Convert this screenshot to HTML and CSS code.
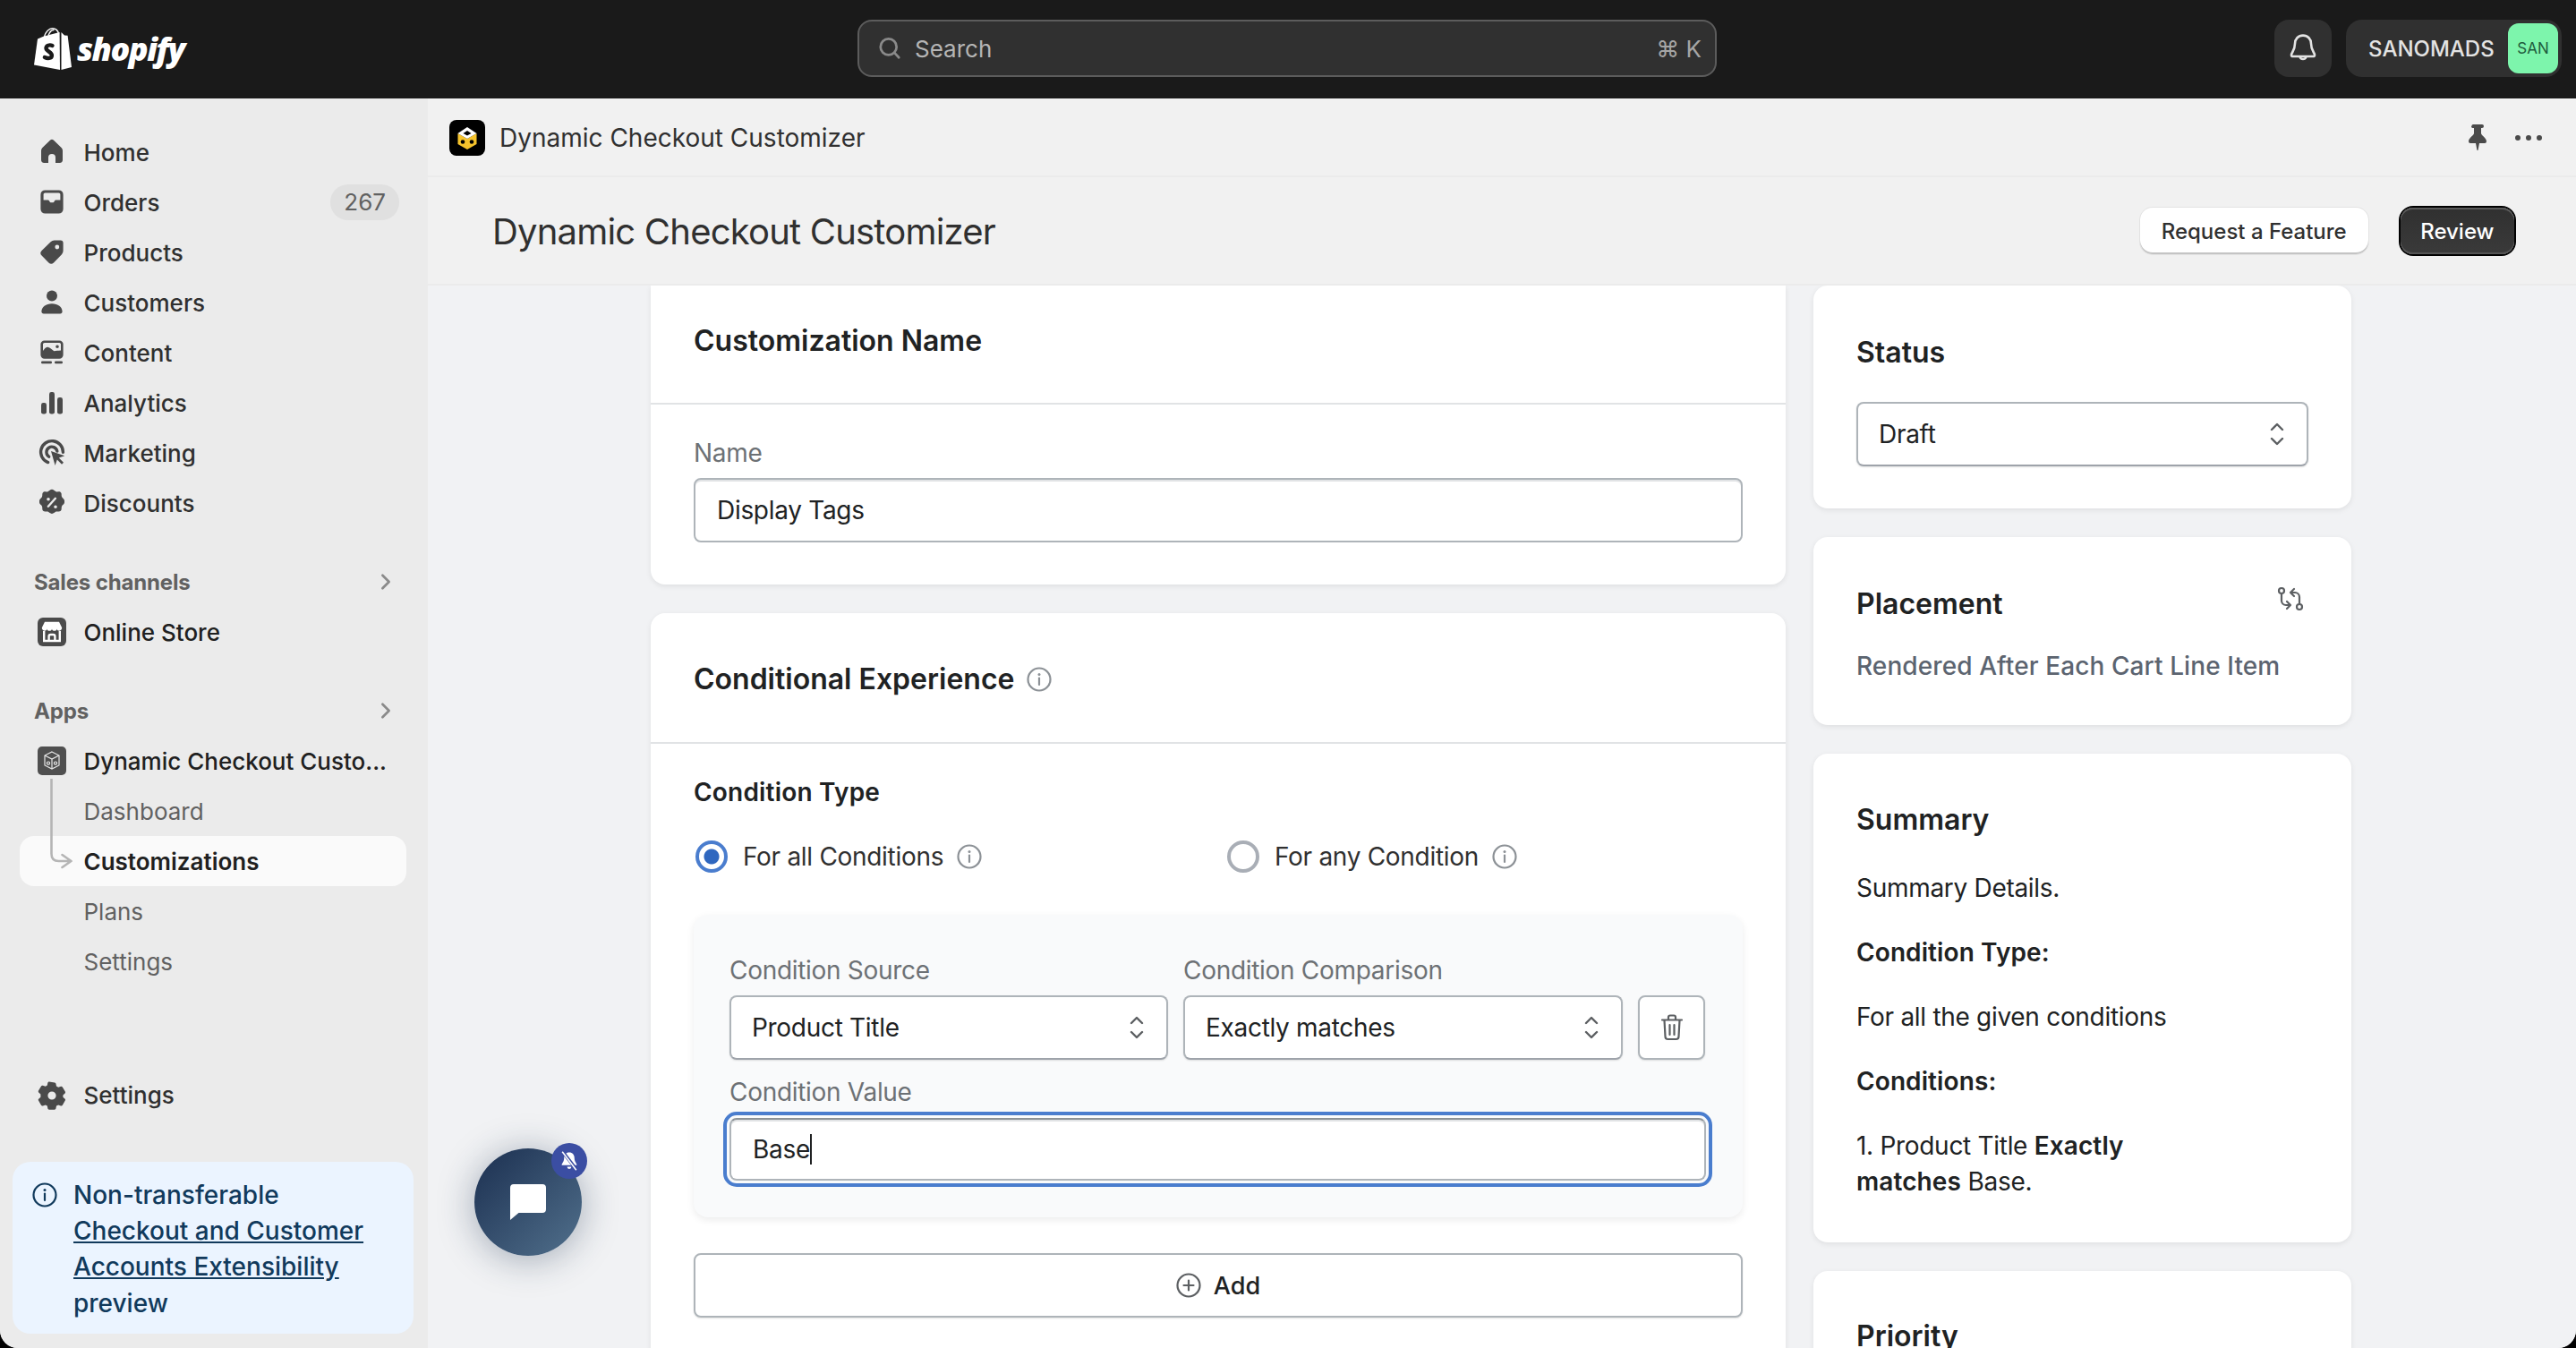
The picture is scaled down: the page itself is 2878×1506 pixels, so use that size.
FILE: index.html
```html
<!DOCTYPE html>
<html lang="en">
  <head>
    <meta charset="UTF-8" />
    <meta name="viewport" content="width=device-width, initial-scale=1.0" />
    <title>Dynamic Checkout Customizer</title>
    <link rel="stylesheet" href="styles.css">
  </head>

  <body>
    <div class="shell">
      <header class="topbar">
        <div class="logo">
          <svg class="logo-bag" viewBox="0 0 42 47" width="42" height="47">
            <path fill="#fff" fill-rule="evenodd" d="M11 9.5 28.6 5 29 47 0 41.5 4 12.5z"/>
            <path fill="#fff" d="M30.5 5 34 8.5l3.6.3L42 44l-11.5 3z"/>
            <path fill="none" stroke="#fff" stroke-width="1.4" d="M11.5 10C13 4 17 .8 20.500.8 25 .8 27 4 27.500 7M16 8.500C17.500 4.500 20 2.200 22.500 2.500"/>
            <path fill="none" stroke="#1a1a1a" stroke-width="4.400" stroke-linecap="round" d="M20.500 20c-3-1.300-7-.3-7 2.800 0 3.800 6.800 4 6.400 8.400-.3 3.200-4.800 3.400-8 1.800"/>
          </svg>
          <span class="logo-text">shopify</span>
        </div>
        <div class="search">
          <svg class="search-icon" viewBox="0 0 20 20" width="32" height="32"><circle cx="9.200" cy="9" r="5.600" fill="none" stroke="#8a8a8a" stroke-width="1.700"/><path d="m13.400 13.200 3 3.200" stroke="#8a8a8a" stroke-width="1.700" stroke-linecap="round"/></svg>
          <span class="search-text">Search</span>
          <span class="search-key">⌘ K</span>
        </div>
        <div class="top-actions">
          <div class="bell">
            <svg viewBox="0 0 20 20" width="40" height="40"><path fill="none" stroke="#e3e3e3" stroke-width="1.300" stroke-linejoin="round" d="M10 2.800c-2.700 0-4.500 2-4.500 4.600 0 3.700-2 5-2 6.300 0 .5.400.8 1 .8h11c.6 0 1-.3 1-.8 0-1.300-2-2.600-2-6.300 0-2.600-1.800-4.600-4.500-4.600z"/><path fill="none" stroke="#e3e3e3" stroke-width="1.300" d="M8.300 14.800a1.800 1.800 0 0 0 3.400 0"/></svg>
          </div>
          <div class="user">
            <span class="user-name">SANOMADS</span>
            <span class="avatar">SAN</span>
          </div>
        </div>
      </header>

      <div class="frame">
        <aside class="sidebar">
          <nav class="nav">
            <a class="nav-row">
              <svg class="nav-icon" viewBox="0 0 20 20"><path d="M10.900 3.300a1.300 1.300 0 0 0-1.800 0L4.700 7.500A2.200 2.200 0 0 0 4 9.100v5.200A1.700 1.700 0 0 0 5.700 16H8v-3a2 2 0 0 1 4 0v3h2.300a1.700 1.700 0 0 0 1.700-1.700V9.100a2.200 2.200 0 0 0-.7-1.600z"/></svg>
              <span>Home</span>
            </a>
            <a class="nav-row">
              <svg class="nav-icon" viewBox="0 0 20 20"><path fill-rule="evenodd" d="M6.200 3.200a2.500 2.500 0 0 0-2.500 2.500v8.100a2.500 2.500 0 0 0 2.500 2.500h7.600a2.500 2.500 0 0 0 2.500-2.500V5.700a2.500 2.500 0 0 0-2.500-2.500zM5.300 8.800V5.700c0-.5.400-.9.900-.9h7.600c.5 0 .9.400.9.900v3.100h-2.300c-.5 0-.8.200-1 .6l-.2.400c-.1.200-.3.300-.5.300H9.300c-.2 0-.4-.1-.5-.3l-.2-.4c-.2-.4-.5-.6-1-.6z"/></svg>
              <span>Orders</span>
              <span class="badge">267</span>
            </a>
            <a class="nav-row">
              <svg class="nav-icon" viewBox="0 0 20 20"><path fill-rule="evenodd" d="M16.300 4.700a1.500 1.500 0 0 0-1.500-1.500h-3.400a3 3 0 0 0-2.100.9L4.300 9a2 2 0 0 0 0 2.800l3.900 3.900a2 2 0 0 0 2.800 0l4.500-4.600a3 3 0 0 0 .8-2.100zM12.900 8.200a1.200 1.200 0 1 1 0-2.400 1.200 1.200 0 0 1 0 2.400z"/></svg>
              <span>Products</span>
            </a>
            <a class="nav-row">
              <svg class="nav-icon" viewBox="0 0 20 20"><circle cx="10" cy="6.300" r="3"/><path d="M4.200 15c0-2.500 2.500-4.400 5.800-4.400s5.800 1.900 5.800 4.400c0 .7-.5 1.200-1.200 1.200H5.400c-.7 0-1.200-.5-1.200-1.200z"/></svg>
              <span>Customers</span>
            </a>
            <a class="nav-row">
              <svg class="nav-icon" viewBox="0 0 20 20"><path fill-rule="evenodd" d="M5.800 3.200a2.100 2.100 0 0 0-2.100 2.100v6a2.100 2.100 0 0 0 2.100 2.100h8.400a2.100 2.100 0 0 0 2.100-2.100v-6a2.100 2.100 0 0 0-2.100-2.100zM5 9V5.300c0-.4.400-.8.800-.8h8.400c.4 0 .8.400.8.800v3.400c-1.500.2-2.700 0-3.800.4-.8-.3-2-1.800-3.200-2.100C6.800 6.400 5.700 8 5 9zm8-1.500a.9.900 0 1 0 0-1.800.9.900 0 0 0 0 1.800z"/><rect x="4" y="14.800" width="6" height="1.300" rx=".6"/><rect x="11.500" y="14.800" width="4.500" height="1.300" rx=".6"/></svg>
              <span>Content</span>
            </a>
            <a class="nav-row">
              <svg class="nav-icon" viewBox="0 0 20 20"><rect x="4" y="10" width="3" height="6.300" rx="1.200"/><rect x="8.500" y="4" width="3" height="12.300" rx="1.200"/><rect x="13" y="7" width="3" height="9.300" rx="1.200"/></svg>
              <span>Analytics</span>
            </a>
            <a class="nav-row">
              <svg class="nav-icon" viewBox="0 0 20 20"><path fill="none" stroke="#4a4a4a" stroke-width="1.700" stroke-linecap="round" d="M7.800 15.300A6.200 6.200 0 1 1 16.200 9.600"/><path fill="none" stroke="#4a4a4a" stroke-width="1.700" stroke-linecap="round" d="M8.300 12.100A3 3 0 1 1 12.900 9"/><path d="m9.500 9 7.600 2.600-3.200 1.200 2.600 2.600-1 1-2.600-2.600-1.100 3.200z"/></svg>
              <span>Marketing</span>
            </a>
            <a class="nav-row">
              <svg class="nav-icon" viewBox="0 0 20 20"><path fill-rule="evenodd" d="M10 2.400c.9 0 1.500.9 2.300 1.200.8.300 1.900-.2 2.600.4.700.6.300 1.700.6 2.500.3.800 1.400 1.200 1.500 2.100v1.200c-.1.900-1.200 1.300-1.500 2.100-.3.800.1 1.900-.6 2.500-.7.600-1.800.1-2.600.4-.8.300-1.400 1.200-2.300 1.200s-1.500-.9-2.300-1.200c-.8-.3-1.900.2-2.600-.4-.7-.6-.3-1.700-.6-2.500-.3-.8-1.400-1.200-1.500-2.100V8.600c.1-.9 1.200-1.300 1.500-2.100.3-.8-.1-1.900.6-2.500.7-.6 1.800-.1 2.600-.4.800-.3 1.400-1.200 2.300-1.200zm2.400 5.400a.6.600 0 0 0-.9-.8l-4 4.500a.6.600 0 0 0 .9.800zM8 8.800a.9.900 0 1 0 0-1.800.9.900 0 0 0 0 1.800zm4 4.200a.9.900 0 1 0 0-1.800.9.900 0 0 0 0 1.800z"/></svg>
              <span>Discounts</span>
            </a>
          </nav>

          <div class="nav-section">
            <div class="nav-head">
              <span>Sales channels</span>
              <svg class="chevron" viewBox="0 0 20 20"><path d="m8 6 4 4-4 4" fill="none" stroke="#8a8a8a" stroke-width="1.500" stroke-linecap="round" stroke-linejoin="round"/></svg>
            </div>
            <a class="nav-row">
              <svg class="nav-icon" viewBox="0 0 20 20"><rect x="2" y="2" width="16" height="16" rx="3" fill="#4a4a4a"/><path fill="none" stroke="#fff" stroke-width="1.200" d="M5.600 9.500V15h8.800V9.500M8.300 15v-2.500a1 1 0 0 1 1-1h1.400a1 1 0 0 1 1 1V15"/><path fill="#fff" d="M6 4.400h8l1.600 3.200c0 2.200-2.800 2.200-2.800.6 0 1.600-2.800 1.600-2.800 0 0 1.600-2.800 1.600-2.800 0 0 1.600-2.800 1.600-2.800-.6z"/></svg>
              <span class="nav-dark">Online Store</span>
            </a>
          </div>

          <div class="nav-section">
            <div class="nav-head">
              <span>Apps</span>
              <svg class="chevron" viewBox="0 0 20 20"><path d="m8 6 4 4-4 4" fill="none" stroke="#8a8a8a" stroke-width="1.500" stroke-linecap="round" stroke-linejoin="round"/></svg>
            </div>
            <div class="app-group">
              <svg class="tree" viewBox="0 0 30 130" width="30" height="130"><path d="M1.500 0v84q0 8 8 8h14M13.500 85l10 7-10 7" fill="none" stroke="#b5b5b5" stroke-width="2.600" stroke-linecap="round" stroke-linejoin="round"/></svg>
              <a class="nav-row">
                <svg class="nav-icon" viewBox="0 0 20 20"><rect x="2" y="2" width="16" height="16" rx="2.500" fill="#4f4f4f"/><g fill="none" stroke="#e8e8e8" stroke-width=".6"><path d="m10 5 4 2v5.500l-4 2-4-2V7z"/><path d="m6 7 4 2 4-2M10 9v5.500"/><circle cx="8" cy="11.300" r=".8"/><circle cx="12" cy="11.300" r=".8"/></g></svg>
                <span class="nav-dark nav-clip">Dynamic Checkout Custo...</span>
              </a>
              <a class="nav-row nav-sub"><span>Dashboard</span></a>
              <a class="nav-row nav-sub nav-active"><span>Customizations</span></a>
              <a class="nav-row nav-sub"><span>Plans</span></a>
              <a class="nav-row nav-sub"><span>Settings</span></a>
            </div>
          </div>

          <div class="nav-foot">
            <a class="nav-row">
              <svg class="nav-icon" viewBox="0 0 20 20"><path fill-rule="evenodd" d="M11.600 2.700c.3.100.5.300.6.600l.3 1.500 1.100.6 1.400-.5c.3-.1.700 0 .9.300l1.500 2.600c.2.300.1.700-.1.900l-1.100 1v1.200l1.100 1c.2.200.3.600.1.900l-1.500 2.600c-.2.300-.6.400-.9.300l-1.400-.5-1.100.6-.3 1.500c-.1.300-.4.600-.7.600H8.400c-.3 0-.6-.3-.7-.6l-.3-1.500-1-.6-1.500.5c-.3.100-.7 0-.9-.3l-1.500-2.600c-.2-.3-.1-.7.100-.9l1.100-1V9.200l-1.100-1c-.2-.2-.3-.6-.1-.9l1.500-2.600c.2-.3.600-.4.900-.3l1.500.5 1-.6.300-1.500c.1-.3.400-.6.700-.6zM10 12.300a2.300 2.300 0 1 0 0-4.600 2.300 2.300 0 0 0 0 4.600z"/></svg>
              <span>Settings</span>
            </a>
            <div class="notice">
              <svg class="notice-icon" viewBox="0 0 28 28" width="28" height="28"><circle cx="14" cy="14" r="12.500" fill="none" stroke="#113a5c" stroke-width="2.200"/><path d="M14 12.500V20" stroke="#113a5c" stroke-width="2.200" stroke-linecap="round"/><circle cx="14" cy="8.500" r="1.500" fill="#113a5c"/></svg>
              <p>Non-transferable <a class="notice-link">Checkout and Customer Accounts Extensibility</a> preview</p>
            </div>
          </div>
        </aside>

        <main class="main">
          <div class="appbar">
            <svg class="app-logo" viewBox="0 0 40 40" width="40" height="40"><rect width="40" height="40" rx="8" fill="#000"/><path fill="#f5c32c" d="M9.500 15 20 21v12L9.500 27zM30.500 15 20 21v12l10.500-6z"/><path fill="#fff" d="m20 8 10.500 7L20 21 9.500 15z"/><path fill="#000" d="m20 12 4.500 3-4.500 2.600-4.500-2.600z"/><circle cx="15" cy="24.500" r="2.300" fill="#000"/><circle cx="25" cy="24.500" r="2.300" fill="#000"/></svg>
            <span class="appbar-name">Dynamic Checkout Customizer</span>
            <div class="appbar-tools">
              <svg viewBox="0 0 22 30" width="22" height="30"><path fill="#4a4a4a" d="M4.500 1.500A1.500 1.500 0 0 1 6 0h10a1.500 1.500 0 0 1 0 4h-1v6c0 2 6 5 6 9a2 2 0 0 1-2 2h-6l-1.400 7.500c-.2.700-1 .7-1.200 0L9 21H3a2 2 0 0 1-2-2c0-4 6-7 6-9V4H6a1.500 1.500 0 0 1-1.500-2.500z"/></svg>
              <svg viewBox="0 0 30 8" width="30" height="8"><circle cx="3" cy="4" r="3" fill="#4a4a4a"/><circle cx="15" cy="4" r="3" fill="#4a4a4a"/><circle cx="27" cy="4" r="3" fill="#4a4a4a"/></svg>
            </div>
          </div>

          <div class="titlebar">
            <h1>Dynamic Checkout Customizer</h1>
            <div class="title-actions">
              <button class="btn">Request a Feature</button>
              <button class="btn btn-dark">Review</button>
            </div>
          </div>

          <div class="content">
            <div class="col-main">
              <section class="card card-name">
                <div class="card-head"><h2>Customization Name</h2></div>
                <div class="card-body">
                  <label class="field-label">Name</label>
                  <div class="input">Display Tags</div>
                </div>
              </section>

              <section class="card card-cond">
                <div class="card-head card-head-tall">
                  <h2>Conditional Experience</h2>
                  <svg class="info" viewBox="0 0 28 28" width="28" height="28"><use href="#i-info"/></svg>
                </div>
                <div class="card-body card-body-cond">
                  <h3>Condition Type</h3>
                  <div class="radio-row">
                    <div class="radio-item">
                      <span class="radio radio-on"></span>
                      <span>For all Conditions</span>
                      <svg class="info" viewBox="0 0 28 28" width="28" height="28"><use href="#i-info"/></svg>
                    </div>
                    <div class="radio-item">
                      <span class="radio"></span>
                      <span>For any Condition</span>
                      <svg class="info" viewBox="0 0 28 28" width="28" height="28"><use href="#i-info"/></svg>
                    </div>
                  </div>

                  <div class="cond-box">
                    <div class="cond-grid">
                      <label class="field-label">Condition Source</label>
                      <label class="field-label">Condition Comparison</label>
                      <span></span>
                      <div class="select"><span>Product Title</span><svg class="updown" viewBox="0 0 16 26" width="16" height="26"><use href="#i-updown"/></svg></div>
                      <div class="select"><span>Exactly matches</span><svg class="updown" viewBox="0 0 16 26" width="16" height="26"><use href="#i-updown"/></svg></div>
                      <div class="icon-btn">
                        <svg viewBox="0 0 26 32" width="26" height="32"><g fill="none" stroke="#5c5f62" stroke-width="2.200" stroke-linecap="round" stroke-linejoin="round"><path d="M2 7.500h22M9 7V4.500A2 2 0 0 1 11 2.500h4a2 2 0 0 1 2 2V7M4.500 8l1 18a3 3 0 0 0 3 3h9a3 3 0 0 0 3-3l1-18M10.500 13v11M15.500 13v11"/></g></svg>
                      </div>
                    </div>
                    <label class="field-label value-label">Condition Value</label>
                    <div class="input input-focus">Base<span class="caret"></span></div>
                  </div>

                  <button class="btn-add">
                    <svg viewBox="0 0 28 28" width="28" height="28"><circle cx="14" cy="14" r="12.500" fill="none" stroke="#5c5f62" stroke-width="2.200"/><path d="M14 8.500v11M8.500 14h11" stroke="#5c5f62" stroke-width="2.200" stroke-linecap="round"/></svg>
                    <span>Add</span>
                  </button>
                </div>
              </section>
            </div>

            <div class="col-side">
              <section class="card side-card card-status">
                <h2>Status</h2>
                <div class="select"><span>Draft</span><svg class="updown" viewBox="0 0 16 26" width="16" height="26"><use href="#i-updown"/></svg></div>
              </section>

              <section class="card side-card card-placement">
                <div class="placement-head">
                  <h2>Placement</h2>
                  <svg viewBox="0 0 30 28" width="30" height="28"><g fill="none" stroke="#5c5f62" stroke-width="2.200" stroke-linecap="round" stroke-linejoin="round"><circle cx="5" cy="5" r="3"/><circle cx="25" cy="23" r="3"/><path d="M5 8.500V16a5 5 0 0 0 5 5h4M11 17l4 4-4 4M25 19.500V12a5 5 0 0 0-5-5h-4M19 11l-4-4 4-4"/></g></svg>
                </div>
                <p class="placement-text">Rendered After Each Cart Line Item</p>
              </section>

              <section class="card side-card card-summary">
                <h2>Summary</h2>
                <p>Summary Details.</p>
                <p><b>Condition Type:</b></p>
                <p>For all the given conditions</p>
                <p><b>Conditions:</b></p>
                <p>1. Product Title <b>Exactly matches</b> Base.</p>
              </section>

              <section class="card side-card card-priority">
                <h2>Priority</h2>
              </section>
            </div>
          </div>

          <div class="chat">
            <svg viewBox="0 0 40 40" width="40" height="40"><path fill="#fff" d="M4 0h32a4 4 0 0 1 4 4v24a4 4 0 0 1-4 4H9.500L0 40V4a4 4 0 0 1 4-4z"/></svg>
            <span class="chat-mute">
              <svg viewBox="0 0 20 20" width="24" height="24"><path fill="#fff" d="M10 2c-3 0-4.800 2.200-4.800 5 0 4-2.200 5-2.200 7h14c0-2-2.200-3-2.200-7 0-2.800-1.800-5-4.800-5zM8 15.500a2 2 0 0 0 4 0z"/><path d="M4 1.500 17 18.500" stroke="#3b4ea3" stroke-width="3"/><path d="M3.500 1.500 16.500 18.500" stroke="#fff" stroke-width="1.300"/></svg>
            </span>
          </div>
        </main>
      </div>
    </div>

    <svg class="defs" width="0" height="0">
      <symbol id="i-info" viewBox="0 0 28 28"><circle cx="14" cy="14" r="12.500" fill="none" stroke="#8c9196" stroke-width="2.200"/><path d="M14 12.500V20" stroke="#8c9196" stroke-width="2.200" stroke-linecap="round"/><circle cx="14" cy="8.500" r="1.500" fill="#8c9196"/></symbol>
      <symbol id="i-updown" viewBox="0 0 16 26"><path d="m2 8 6-6 6 6M2 18l6 6 6-6" fill="none" stroke="#5c5f62" stroke-width="2.400" stroke-linecap="round" stroke-linejoin="round"/></symbol>
    </svg>
  </body>
</html>
```

FILE: styles.css
```css
* {
  box-sizing: border-box;
}

html,
body {
  margin: 0;
  height: 1506px;
  overflow: hidden;
  background: #000;
}

body {
  font-family: Inter, "Noto Sans", sans-serif;
  font-size: 28px;
  letter-spacing: -0.3px;
  color: #202223;
}

h1,
h2,
h3,
p {
  margin: 0;
}

.defs {
  position: absolute;
}

.shell {
  display: flex;
  flex-direction: column;
  height: 1506px;
  border-radius: 0 0 20px 20px;
  overflow: hidden;
  background: #ebebeb;
  letter-spacing: 0;
}

/* top bar */
.topbar {
  flex: none;
  display: grid;
  grid-template-columns: 920px 960px 1fr;
  align-items: center;
  height: 110px;
  padding: 0 16px 2px 38px;
  background: #1a1a1a;
}

.logo {
  display: flex;
  align-items: center;
  gap: 6px;
}

.logo-text {
  font-family: "Open Sans", sans-serif;
  font-weight: 800;
  font-style: italic;
  font-size: 36px;
  letter-spacing: -1.500px;
  color: #fff;
  line-height: 47px;
}

.search {
  display: flex;
  align-items: center;
  height: 64px;
  padding: 0 15px 0 18px;
  border: 2px solid #5c5c5c;
  border-radius: 16px;
  background: #303030;
  color: #b5b5b5;
  font-size: 26px;
}

.search-icon {
  margin-right: 12px;
}

.search-key {
  margin-left: auto;
  font-size: 26px;
  color: #a5a5a5;
}

.top-actions {
  display: flex;
  justify-content: flex-end;
  gap: 16px;
}

.bell {
  display: flex;
  align-items: center;
  justify-content: center;
  width: 64px;
  height: 64px;
  border-radius: 16px;
  background: #303030;
}

.user {
  display: flex;
  align-items: center;
  height: 64px;
  padding: 0 4px 0 25px;
  border-radius: 18px;
  background: #303030;
}

.user-name {
  width: 156px;
  font-size: 24px;
  font-weight: 500;
  color: #e3e3e3;
}

.avatar {
  display: flex;
  align-items: center;
  justify-content: center;
  width: 56px;
  height: 56px;
  border-radius: 12px;
  background: #7df5ac;
  color: #1f5c3e;
  font-size: 17px;
}

.frame {
  flex: 1;
  display: flex;
  min-height: 0;
}

/* sidebar */
.sidebar {
  flex: none;
  display: flex;
  flex-direction: column;
  width: 478px;
  padding: 32px 24px 16px 22px;
  background: #ebebeb;
}

.nav-row {
  display: flex;
  align-items: center;
  gap: 15.500px;
  height: 56px;
  padding: 0 8px 0 16px;
  border-radius: 16px;
  font-size: 26px;
  font-weight: 500;
  color: #303030;
}

.nav-icon {
  flex: none;
  width: 40px;
  height: 40px;
  fill: #4a4a4a;
}

.badge {
  margin-left: auto;
  padding: 0 15px;
  height: 40px;
  line-height: 40px;
  border-radius: 20px;
  background: #e0e0e0;
  color: #616161;
  font-weight: 400;
}

.nav-section {
  margin-top: 32px;
}

.nav-head {
  display: flex;
  align-items: center;
  justify-content: space-between;
  height: 56px;
  padding: 0 5px 0 16px;
  font-size: 24px;
  font-weight: 650;
  letter-spacing: -0.150px;
  color: #616161;
}

.chevron {
  width: 36px;
  height: 36px;
}

.nav-dark {
  color: #202020;
}

.nav-clip {
  white-space: nowrap;
}

.app-group {
  position: relative;
}

.tree {
  position: absolute;
  left: 34px;
  top: 48px;
  z-index: 1;
}

.nav-sub {
  padding-left: 71.500px;
  color: #616161;
  font-weight: 400;
}

.nav-active {
  background: #fafafa;
  color: #202020;
  font-weight: 600;
}

.nav-foot {
  margin-top: auto;
}

.nav-foot .nav-row {
  margin-top: 2px;
}

.notice {
  display: flex;
  gap: 18px;
  margin: 46px -8px 0 -8px;
  padding: 17px 20px 14px 22px;
  border-radius: 20px;
  background: #ebf4ff;
  color: #113a5c;
  font-size: 28px;
  font-weight: 500;
  line-height: 40.300px;
}

.notice-icon {
  flex: none;
  margin-top: 6px;
}

.notice-link {
  text-decoration: underline;
}

/* main column */
.main {
  position: relative;
  flex: 1;
  display: flex;
  flex-direction: column;
  min-width: 0;
  background: #f1f2f4;
}

.appbar {
  flex: none;
  display: flex;
  align-items: center;
  gap: 16px;
  height: 88px;
  padding: 2px 38px 0 24px;
  background: #f1f1f1;
  border-bottom: 2px solid #ebebeb;
}

.appbar-name {
  font-size: 28px;
  color: #303030;
}

.appbar-tools {
  display: flex;
  align-items: center;
  gap: 31px;
  margin-left: auto;
}

.titlebar {
  flex: none;
  display: flex;
  align-items: center;
  justify-content: space-between;
  height: 121px;
  padding: 1px 69px 0 72px;
  background: #f1f1f1;
  border-bottom: 2px solid #ebebeb;
}

h1 {
  font-size: 40px;
  font-weight: 400;
  letter-spacing: -0.800px;
  color: #303030;
}

.title-actions {
  display: flex;
  align-items: center;
  gap: 36px;
}

.btn {
  height: 52px;
  padding: 0 24px;
  border: 0;
  border-radius: 14px;
  background: #fff;
  box-shadow: 0 0 0 1px #e3e3e3, inset 0 -2px 0 #c4c4c4;
  font: 500 24px Inter, sans-serif;
  color: #303030;
}

.btn-dark {
  padding: 0 22.500px;
  background: linear-gradient(#303030, #3a3a3a);
  box-shadow: 0 0 0 2px #000, inset 0 2px 0 #5a5a5a, inset 0 -2px 0 #555;
  color: #fff;
}

.content {
  flex: 1;
  display: flex;
  gap: 31px;
  min-height: 0;
  overflow: hidden;
  padding-left: 249px;
  letter-spacing: -0.3px;
}

.col-main {
  flex: none;
  width: 1268px;
}

.col-side {
  flex: none;
  width: 601px;
}

.card {
  background: #fff;
  border-radius: 16px;
  box-shadow: 0 2px 6px rgba(0, 0, 0, 0.08);
}

.card-name {
  border-radius: 0 0 16px 16px;
  height: 334px;
}

.card-cond {
  margin-top: 32px;
  padding-bottom: 100px;
  border-radius: 16px 16px 0 0;
}

.card-head {
  display: flex;
  align-items: center;
  gap: 14px;
  height: 133px;
  padding: 0 48px 8px;
  border-bottom: 2px solid #e1e3e5;
}

.card-head-tall {
  height: 146px;
  padding-bottom: 0;
  padding-top: 3px;
}

h2 {
  font-size: 32px;
  font-weight: 600;
  letter-spacing: 0;
  color: #202223;
}

h3 {
  font-size: 28px;
  font-weight: 600;
  line-height: 40px;
  letter-spacing: 0.200px;
  color: #202223;
}

.card-body {
  padding: 34px 48px 0;
}

.card-body-cond {
  padding-top: 34px;
}

.field-label {
  display: block;
  font-size: 28px;
  line-height: 40px;
  color: #6d7175;
}

.input {
  display: flex;
  align-items: center;
  height: 72px;
  margin-top: 8px;
  padding: 0 24px;
  border: 2px solid #aeb4b9;
  border-radius: 8px;
  background: #fff;
  box-shadow: inset 0 2px 0 #e1e3e5;
}

.select {
  display: flex;
  align-items: center;
  justify-content: space-between;
  height: 72px;
  padding: 0 25px 0 23px;
  border: 2px solid #aeb4b9;
  border-bottom-color: #9ea3aa;
  border-radius: 8px;
  background: #fff;
  box-shadow: 0 1px 2px rgba(0, 0, 0, 0.12);
}

.radio-row {
  display: grid;
  grid-template-columns: 594px auto;
  margin-top: 34px;
}

.radio-item {
  display: flex;
  align-items: center;
  gap: 15px;
  height: 36px;
  color: #303030;
}

.radio {
  flex: none;
  width: 36px;
  height: 36px;
  margin: 0 2px;
  border: 4px solid #a9aeb6;
  border-radius: 50%;
  background: #fff;
}

.radio-on {
  border-color: #4a7dce;
  background: radial-gradient(circle, #2f67bf 0 8px, #fff 9px);
}

.cond-box {
  margin-top: 47px;
  padding: 42px 41px 41px 40px;
  border-radius: 16px;
  background: #f9fafb;
  box-shadow: 0 3px 8px rgba(0, 0, 0, 0.08);
}

.cond-grid {
  display: grid;
  grid-template-columns: 490px 491px 75px;
  column-gap: 17px;
  row-gap: 8px;
}

.icon-btn {
  display: flex;
  align-items: center;
  justify-content: center;
  height: 72px;
  border: 2px solid #aeb4b9;
  border-radius: 8px;
  background: #fff;
  box-shadow: 0 1px 2px rgba(0, 0, 0, 0.12);
}

.value-label {
  margin-top: 16px;
}

.input-focus {
  position: relative;
  margin-top: 9px;
  height: 70px;
  padding-left: 24px;
  outline: 4px solid #4a7dce;
  outline-offset: 3px;
  border-top-color: #8c9196;
}

.caret {
  width: 2px;
  height: 34px;
  background: #202223;
}

.btn-add {
  display: flex;
  align-items: center;
  justify-content: center;
  gap: 14px;
  width: 100%;
  height: 72px;
  margin-top: 40px;
  border: 2px solid #aeb4b9;
  border-radius: 8px;
  background: #fff;
  box-shadow: 0 1px 2px rgba(0, 0, 0, 0.12);
  font: 500 27px Inter, sans-serif;
  color: #202223;
}

.side-card {
  padding: 0 48px;
  margin-bottom: 32px;
}

.side-card h2 {
  line-height: 40px;
}

.card-status {
  height: 249px;
  padding-top: 55px;
}

.card-status .select {
  margin-top: 35px;
}

.card-placement {
  height: 210px;
  padding-top: 55px;
}

.placement-head {
  display: flex;
  align-items: flex-start;
  justify-content: space-between;
  padding-right: 5px;
}

.placement-text {
  margin-top: 29px;
  line-height: 40px;
  font-weight: 500;
  letter-spacing: 0.100px;
  color: #5c6470;
}

.card-summary {
  height: 546px;
  padding-top: 54px;
}

.card-summary p {
  max-width: 400px;
  margin-top: 32px;
  line-height: 40px;
}

.card-summary h2 + p {
  margin-top: 36px;
}

.card-summary b {
  font-weight: 600;
  letter-spacing: 0.100px;
}

.card-priority {
  height: 120px;
  padding-top: 53px;
  margin-bottom: 0;
}

/* chat bubble */
.chat {
  position: absolute;
  left: 52px;
  top: 1173px;
  display: flex;
  align-items: center;
  justify-content: center;
  width: 120px;
  height: 120px;
  border-radius: 50%;
  background: linear-gradient(135deg, #1b2f50, #51708c);
  box-shadow: 0 4px 40px rgba(30, 50, 80, 0.38);
}

.chat-mute {
  position: absolute;
  top: -6px;
  right: -6px;
  display: flex;
  align-items: center;
  justify-content: center;
  width: 40px;
  height: 40px;
  border-radius: 50%;
  background: #3b4ea3;
}
```
